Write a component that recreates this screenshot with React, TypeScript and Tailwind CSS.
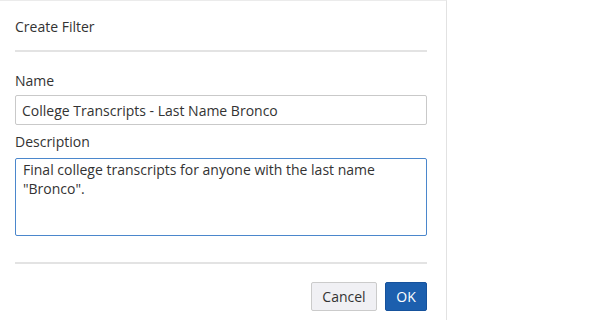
import { useState } from "react";

export default function App() {
  const [name, setName] = useState("College Transcripts - Last Name Bronco");
  const [description, setDescription] = useState(
    'Final college transcripts for anyone with the last name "Bronco".',
  );

  return (
    <div
      className="flex h-[320px] w-[600px] bg-white text-[14px] text-[#333333]"
      style={{ fontFamily: '"Open Sans", "Noto Sans", sans-serif' }}
    >
      <div className="flex w-[447px] flex-col border-t border-r border-t-[#ebebeb] border-r-[#e2e2e2] pl-[15px] pr-[19px]">
        <h2 className="mt-[16px] text-[14px] leading-[20px] font-normal">
          Create Filter
        </h2>
        <div className="mt-[13px] h-[2px] bg-[#e3e3e3]" />

        <label className="mt-[19px] leading-[20px]">Name</label>
        <input
          value={name}
          onChange={(e) => setName(e.target.value)}
          className="mt-[4px] h-[30px] w-full rounded-[2px] border border-[#c9c9c9] px-[6px] leading-[20px] outline-none"
        />

        <label className="mt-[7px] leading-[20px]">Description</label>
        <textarea
          value={description}
          onChange={(e) => setDescription(e.target.value)}
          className="mt-[6px] h-[78px] w-full resize-none rounded-[2px] border border-[#4b87cc] px-[7px] py-[1px] leading-[19px] outline-none"
        />

        <div className="mt-[26px] h-[2px] bg-[#e3e3e3]" />

        <div className="mt-[18px] flex justify-end gap-[8px]">
          <button className="h-[29px] w-[66px] rounded-[2px] border border-[#cbcbcb] bg-[#f0f0f4] text-[14px] text-[#333333]">
            Cancel
          </button>
          <button className="h-[29px] w-[42px] rounded-[2px] border border-[#16529c] bg-[#1c5fae] text-[14px] text-white">
            OK
          </button>
        </div>
      </div>
    </div>
  );
}
